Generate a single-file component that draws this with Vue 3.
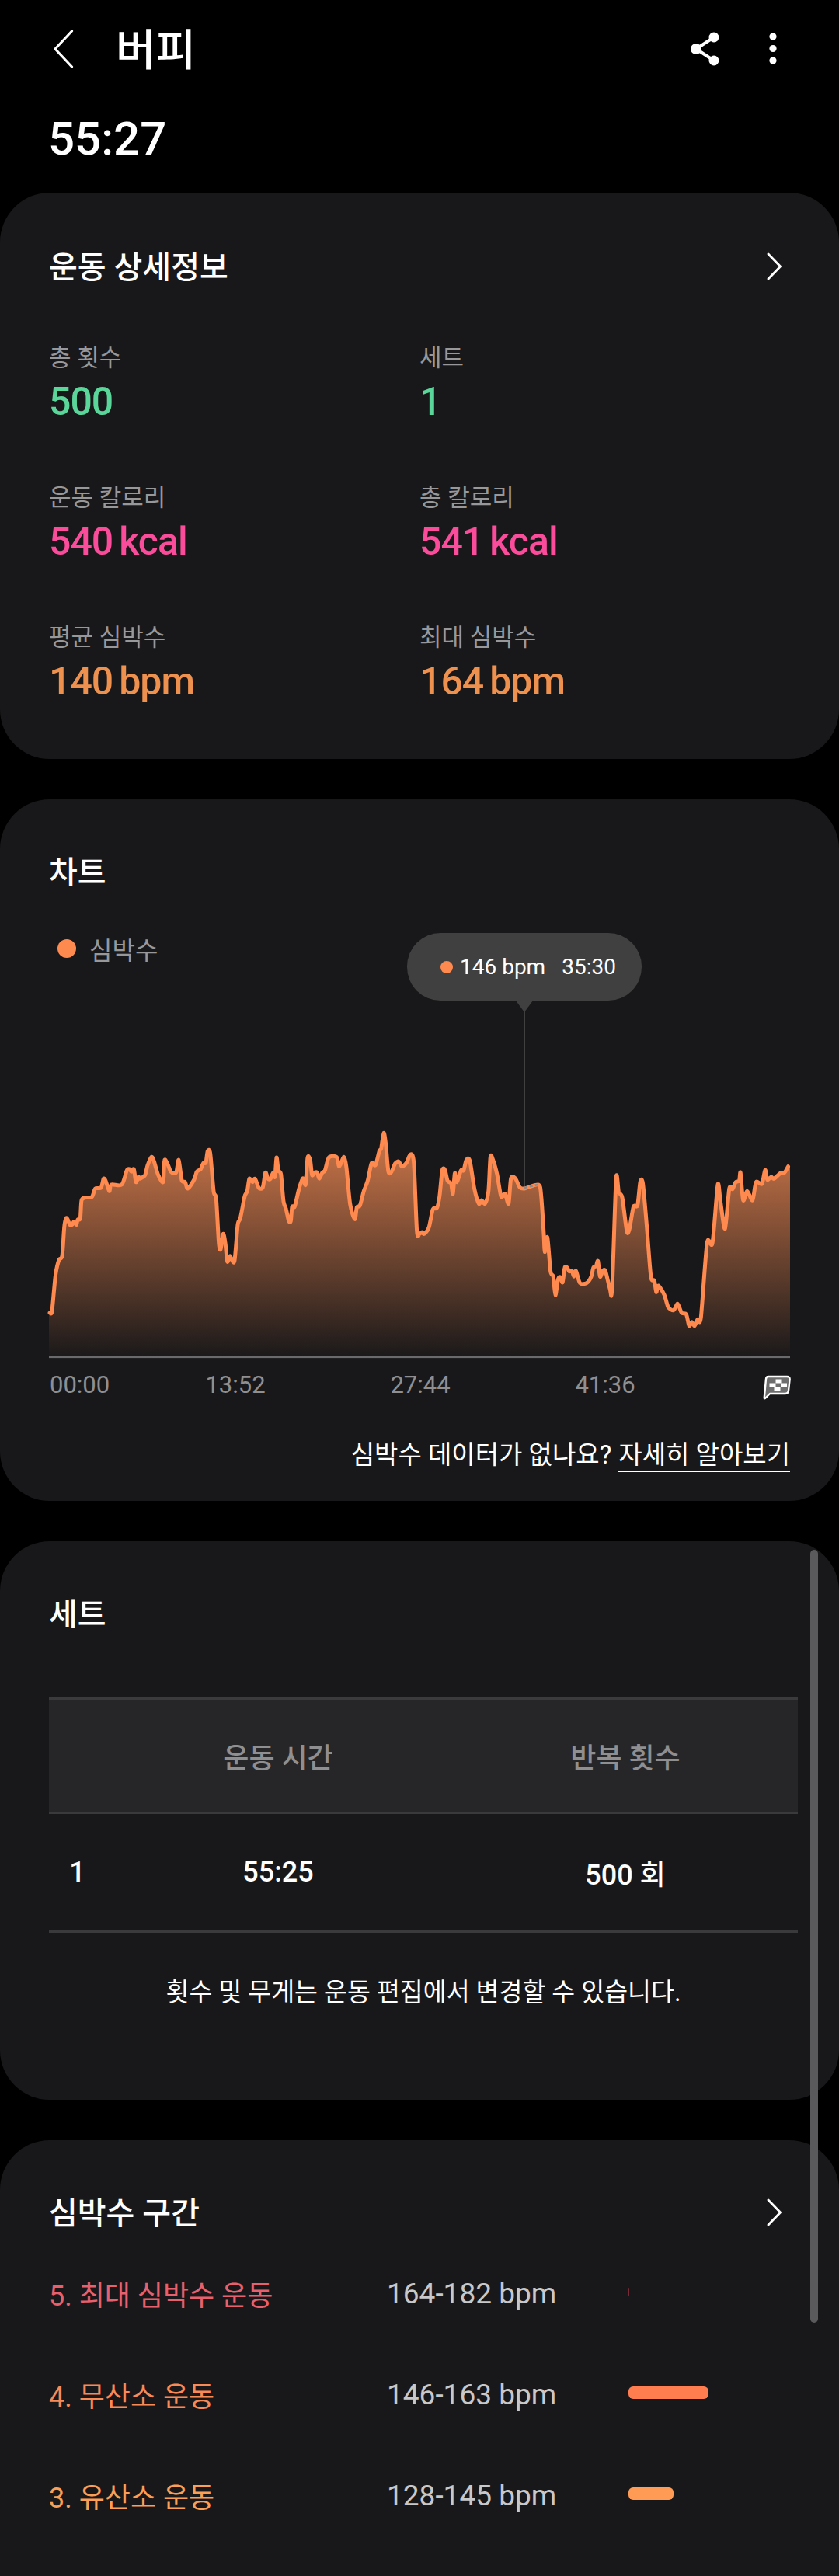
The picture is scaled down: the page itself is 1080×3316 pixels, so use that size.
<script setup>
const z3 = [[72,870],[80,868],[88,790],[95,720],[108,665],[120,650],[128,540],[135,505],[142,510],[150,530],[160,528],[165,518],[175,530],[180,510],[190,505],[195,435],[210,425],[235,422],[248,390],[270,387],[280,352],[288,360],[302,400],[310,375],[350,375],[370,320],[380,315],[388,325],[397,315],[405,365],[415,345],[420,352],[440,338],[450,300],[465,268],[475,285],[490,335],[510,365],[515,282],[525,290],[540,325],[560,328],[570,280],[582,358],[595,365],[605,390],[630,355],[640,325],[655,315],[665,292],[675,290],[682,245],[692,255],[705,400],[715,430],[725,600],[732,625],[742,565],[750,600],[758,672],[768,650],[785,672],[798,530],[808,505],[825,420],[835,400],[843,352],[855,365],[865,352],[880,388],[895,385],[905,328],[915,352],[925,352],[935,328],[942,345],[948,270],[955,320],[965,335],[975,440],[985,470],[995,515],[1003,515],[1008,460],[1018,460],[1035,390],[1050,350],[1060,375],[1068,270],[1078,280],[1085,338],[1095,328],[1105,328],[1113,352],[1125,328],[1135,320],[1150,270],[1180,268],[1190,305],[1208,268],[1218,310],[1232,450],[1250,508],[1258,462],[1270,455],[1285,400],[1300,360],[1315,292],[1330,300],[1345,245],[1352,235],[1362,175],[1370,220],[1380,325],[1392,325],[1405,295],[1420,285],[1432,305],[1450,290],[1465,258],[1478,290],[1490,555],[1500,565],[1510,558],[1518,565]]
const z4 = [[35,540],[50,470],[65,465],[75,420],[85,320],[95,318],[105,360],[118,370],[125,410],[132,330],[140,365],[155,320],[165,320],[175,280],[188,282],[205,390],[222,448],[232,435],[245,448],[258,400],[265,268],[275,280],[290,335],[305,420],[320,410],[333,448],[342,350],[358,350],[375,385],[392,390],[445,375],[455,420],[465,570],[468,635],[478,578],[490,710],[500,730],[508,802],[518,740],[527,732],[535,752],[543,695],[552,695],[560,710],[570,708],[577,730],[585,708],[600,755],[625,755],[642,730],[650,695],[660,690],[667,670],[675,730],[685,708],[695,708],[712,778],[720,778],[735,352],[745,405],[758,425],[775,555],[785,545],[800,460],[815,455],[825,365],[835,370],[850,540],[865,730],[878,745],[885,790],[893,765],[915,800],[930,848],[950,860],[965,835],[980,870],[997,875],[1008,920],[1018,905],[1028,920],[1040,895],[1052,888],[1075,600],[1095,600],[1115,375],[1125,440],[1142,545],[1158,390],[1170,392],[1182,365],[1195,360],[1200,328],[1210,435],[1225,400],[1245,435],[1258,365],[1280,372],[1292,318],[1300,355],[1315,345],[1325,352],[1350,330],[1365,328],[1378,305]]

const pts = [
  ...z3.map(([x, y]) => [40 + x / 3, 1400 + y / 3]),
  ...z4.map(([x, y]) => [540 + x / 2.904, 1400 + y / 3])
]

function smooth(p) {
  const f = (n) => n.toFixed(1)
  const k = 0.13
  let d = `M${f(p[0][0])} ${f(p[0][1])}`
  for (let i = 0; i < p.length - 1; i++) {
    const a = p[Math.max(i - 1, 0)]
    const b = p[i]
    const c = p[i + 1]
    const e = p[Math.min(i + 2, p.length - 1)]
    d += `C${f(b[0] + (c[0] - a[0]) * k)} ${f(b[1] + (c[1] - a[1]) * k)} ${f(c[0] - (e[0] - b[0]) * k)} ${f(c[1] - (e[1] - b[1]) * k)} ${f(c[0])} ${f(c[1])}`
  }
  return d
}

const linePath = smooth(pts)
const areaPath = `M63 1746L63 ${pts[0][1].toFixed(1)}L${linePath.slice(1)}L1017 ${pts[pts.length - 1][1].toFixed(1)}L1017 1746Z`

const stats = [
  { label: '총 횟수', value: '500', unit: '', tone: 'green' },
  { label: '세트', value: '1', unit: '', tone: 'green' },
  { label: '운동 칼로리', value: '540', unit: 'kcal', tone: 'pink' },
  { label: '총 칼로리', value: '541', unit: 'kcal', tone: 'pink' },
  { label: '평균 심박수', value: '140', unit: 'bpm', tone: 'orange' },
  { label: '최대 심박수', value: '164', unit: 'bpm', tone: 'orange' }
]

const zones = [
  { name: '5. 최대 심박수 운동', range: '164-182 bpm', color: '#e8606e', bar: '#7a2a35', width: 1, height: 10 },
  { name: '4. 무산소 운동', range: '146-163 bpm', color: '#f98a55', bar: '#ff7d4f', width: 103, height: 16 },
  { name: '3. 유산소 운동', range: '128-145 bpm', color: '#fb9f56', bar: '#ff9b55', width: 58, height: 16 }
]
</script>

<template>
  <div class="page">
    <header class="topbar">
      <svg class="back" width="28" height="50" viewBox="0 0 28 50">
        <path d="M24.5 2 L3 25 L24.5 48" fill="none" stroke="#fff" stroke-width="3.2" stroke-linecap="round" stroke-linejoin="round" />
      </svg>
      <h1 class="page-title">버피</h1>
      <svg class="share" width="44" height="46" viewBox="0 0 44 46">
        <path d="M33 8 L10 23 L33 38" fill="none" stroke="#fff" stroke-width="4" />
        <circle cx="33" cy="8" r="6.5" fill="#fff" />
        <circle cx="10" cy="23" r="7" fill="#fff" />
        <circle cx="33" cy="38" r="6.5" fill="#fff" />
      </svg>
      <svg class="kebab" width="12" height="44" viewBox="0 0 12 44">
        <circle cx="6" cy="6" r="4.6" fill="#fff" />
        <circle cx="6" cy="21.5" r="4.6" fill="#fff" />
        <circle cx="6" cy="37" r="4.6" fill="#fff" />
      </svg>
    </header>

    <div class="duration">55:27</div>

    <section class="card card-stats">
      <div class="card-head">
        <h2 class="card-title">운동 상세정보</h2>
        <svg class="chev" width="22" height="38" viewBox="0 0 22 38">
          <path d="M3 3 L18.5 19 L3 35" fill="none" stroke="#fff" stroke-width="3" stroke-linecap="round" stroke-linejoin="round" />
        </svg>
      </div>
      <div class="stat-grid">
        <div v-for="s in stats" :key="s.label" class="stat">
          <div class="stat-label">{{ s.label }}</div>
          <div class="stat-value" :class="s.tone">
            <span>{{ s.value }}</span><span v-if="s.unit" class="unit">{{ s.unit }}</span>
          </div>
        </div>
      </div>
    </section>

    <section class="card card-chart">
      <h2 class="card-title">차트</h2>
      <div class="legend"><i class="legend-dot"></i><span>심박수</span></div>
      <div class="chart">
        <svg class="chart-svg" width="954" height="507" viewBox="63 1243 954 507">
          <defs>
            <linearGradient id="hrFill" gradientUnits="userSpaceOnUse" x1="0" y1="1470" x2="0" y2="1746">
              <stop offset="0" stop-color="#c87448" />
              <stop offset="1" stop-color="#1b191a" />
            </linearGradient>
          </defs>
          <path :d="areaPath" fill="url(#hrFill)" />
          <line x1="675" y1="1300" x2="675" y2="1528" stroke="#404040" stroke-width="2" />
          <path :d="linePath" fill="none" stroke="#ff8a50" stroke-width="5" stroke-linejoin="round" stroke-linecap="round" />
          <line x1="675" y1="1529" x2="692" y2="1525" stroke="#8a8a8a" stroke-width="2.5" stroke-dasharray="4 3" />
          <rect x="63" y="1745.5" width="954" height="2.6" fill="#6a6a6c" />
        </svg>
        <div class="tooltip">
          <i class="tip-dot"></i><span class="tip-text">146 bpm</span><span class="tip-text tip-time">35:30</span>
          <svg class="tip-arrow" width="22" height="15" viewBox="0 0 22 15"><path d="M0 0H22L11 15Z" fill="#404040" /></svg>
        </div>
      </div>
      <div class="axis">
        <span class="tick first">00:00</span>
        <span class="tick">13:52</span>
        <span class="tick">27:44</span>
        <span class="tick">41:36</span>
        <svg class="flag" width="36" height="32" viewBox="0 0 36 32">
          <path d="M7 2 H31 Q35 2 34.6 6 L33 20 Q32.6 24 28.5 24 H9 L3 30 Q1.6 30.8 1.8 29 L4 5 Q4.3 2 7 2 Z" fill="#6e6e6e" stroke="#fff" stroke-width="2.4" stroke-linejoin="round" />
          <rect x="16.5" y="5.5" width="7" height="5" fill="#fff" />
          <rect x="8.5" y="10.5" width="8" height="5.5" fill="#fff" />
          <rect x="23" y="10.5" width="8" height="5.5" fill="#fff" />
          <rect x="14.5" y="16" width="8" height="5" fill="#fff" />
        </svg>
      </div>
      <div class="help">
        <span>심박수 데이터가 없나요?</span>
        <span class="help-link">자세히 알아보기</span>
      </div>
    </section>

    <section class="card card-sets">
      <h2 class="card-title">세트</h2>
      <div class="table">
        <div class="t-row t-head">
          <span></span><span class="t-cell">운동 시간</span><span class="t-cell">반복 횟수</span>
        </div>
        <div class="t-row t-body">
          <span class="t-index">1</span><span class="t-cell">55:25</span><span class="t-cell">500 회</span>
        </div>
      </div>
      <p class="note">횟수 및 무게는 운동 편집에서 변경할 수 있습니다.</p>
    </section>

    <section class="card card-zones">
      <div class="card-head">
        <h2 class="card-title">심박수 구간</h2>
        <svg class="chev" width="22" height="38" viewBox="0 0 22 38">
          <path d="M3 3 L18.5 19 L3 35" fill="none" stroke="#fff" stroke-width="3" stroke-linecap="round" stroke-linejoin="round" />
        </svg>
      </div>
      <div class="zones">
        <div v-for="z in zones" :key="z.name" class="zone">
          <span class="zone-name" :style="{ color: z.color }">{{ z.name }}</span>
          <span class="zone-range">{{ z.range }}</span>
          <span class="zone-bar" :style="{ width: z.width + 'px', height: z.height + 'px', background: z.bar }"></span>
        </div>
      </div>
    </section>

    <div class="scrollbar"></div>
  </div>
</template>

<style>
html, body { margin: 0; background: #000; }
</style>

<style scoped>
.page {
  position: relative;
  width: 1080px;
  height: 3316px;
  overflow: hidden;
  background: #000;
  color: #fff;
  font-family: Roboto, "Noto Sans CJK KR", sans-serif;
}
.topbar {
  display: flex;
  align-items: center;
  height: 126px;
  padding: 0 0 0 68px;
  box-sizing: border-box;
}
.back { flex: none; }
.page-title {
  margin: 4px 0 0 53px;
  font-size: 56px;
  font-weight: 500;
  line-height: 64px;
  flex: 1;
}
.share { margin-right: 59px; }
.kebab { margin-right: 79px; }
.duration {
  margin: 18px 0 34px;
  padding-left: 62px;
  height: 70px;
  line-height: 70px;
  font-size: 60px;
  font-weight: 500;
}
.card {
  background: #18181a;
  border-radius: 64px;
  padding: 0 63px;
  margin-bottom: 52px;
  box-sizing: border-box;
}
.card-title {
  margin: 0;
  font-size: 40px;
  font-weight: 500;
  line-height: 64px;
}
.card-head {
  display: flex;
  align-items: flex-start;
  justify-content: space-between;
  padding-right: 9px;
}
.chev { margin-top: 11px; }
.card-stats { padding-top: 65px; padding-bottom: 66px; }
.stat-grid {
  margin-top: 62px;
  display: grid;
  grid-template-columns: 477px 1fr;
  row-gap: 68px;
}
.stat-label {
  color: #98989b;
  font-size: 31px;
  line-height: 44px;
}
.stat-value {
  font-size: 50px;
  font-weight: 500;
  line-height: 68px;
  letter-spacing: -1px;
  display: flex;
  gap: 8px;
}
.green { color: #5ad69b; }
.pink { color: #fb4c9b; }
.orange { color: #ee914f; }

.card-chart { padding-top: 63px; padding-bottom: 37px; }
.legend {
  margin-top: 43px;
  display: flex;
  align-items: center;
  height: 44px;
  padding-left: 11px;
  color: #98989b;
  font-size: 32px;
}
.legend-dot {
  width: 24px;
  height: 24px;
  border-radius: 50%;
  background: #ff8a50;
  margin-right: 17px;
}
.chart { position: relative; width: 954px; height: 507px; }
.chart-svg { display: block; overflow: visible; }
.tooltip {
  position: absolute;
  left: 461px;
  top: -42px;
  width: 302px;
  height: 87px;
  box-sizing: border-box;
  padding-left: 43px;
  border-radius: 43px;
  background: #404040;
  display: flex;
  align-items: center;
  font-size: 28px;
  color: #fff;
}
.tip-dot {
  width: 16px;
  height: 16px;
  border-radius: 50%;
  background: #ff8a50;
  margin-right: 9px;
}
.tip-time { margin-left: 21px; }
.tip-arrow {
  position: absolute;
  left: 140px;
  top: 87px;
}
.axis {
  margin-top: 12px;
  height: 42px;
  display: grid;
  grid-template-columns: 121px 238px 238px 238px 1fr;
  align-items: center;
  color: #8f8f91;
  font-size: 31px;
  line-height: 42px;
}
.tick { text-align: center; }
.tick.first { text-align: left; padding-left: 1px; }
.flag { justify-self: end; margin-right: -1px; margin-top: 5px; }
.help {
  margin-top: 49px;
  display: flex;
  justify-content: flex-end;
  align-items: flex-start;
  gap: 9px;
  font-size: 33px;
  line-height: 40px;
  height: 42px;
}
.help-link { border-bottom: 2px solid #fff; }

.card-sets { padding-top: 63px; padding-bottom: 116px; }
.table {
  margin-top: 74px;
  width: 964px;
}
.t-row {
  display: grid;
  grid-template-columns: 70px 450px 444px;
  align-items: center;
  font-size: 36px;
  font-weight: 500;
  box-sizing: border-box;
}
.t-head {
  height: 150px;
  background: #262628;
  border-top: 3px solid #3a3a3c;
  border-bottom: 3px solid #3a3a3c;
  color: #8f8f91;
}
.t-body {
  height: 153px;
  border-bottom: 3px solid #3a3a3c;
}
.t-cell { text-align: center; }
.t-index { text-align: center; padding-left: 3px; }
.note {
  margin: 55px 0 0;
  width: 964px;
  text-align: center;
  font-size: 32.5px;
  line-height: 44px;
}

.card-zones { padding-top: 63px; padding-bottom: 120px; margin-bottom: 0; }
.zones { margin-top: 5px; }
.zone {
  display: grid;
  grid-template-columns: 435px 311px 1fr;
  align-items: center;
  height: 130px;
  font-size: 36px;
}
.zone-range { color: #c8c8ca; font-size: 37px; }
.zone-bar {
  border-radius: 6px;
  margin-bottom: 4px;
}
.scrollbar {
  position: absolute;
  right: 27px;
  top: 1995px;
  width: 10px;
  height: 995px;
  border-radius: 5px;
  background: #5a5a5c;
}
</style>
